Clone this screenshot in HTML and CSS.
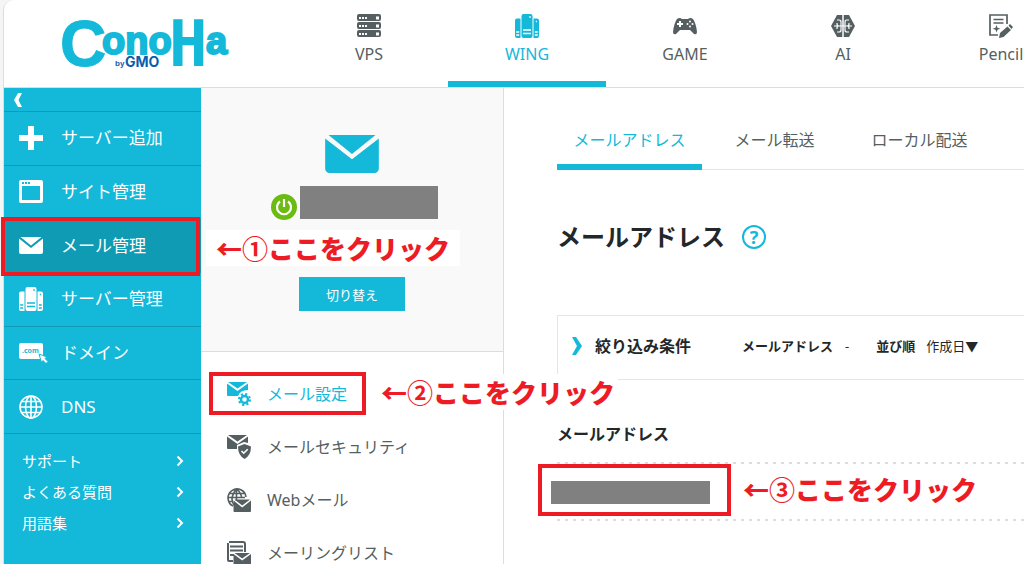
FILE: index.html
```
<!DOCTYPE html>
<html lang="ja">
<head>
    <meta charset="UTF-8">
    <meta name="viewport" content="width=device-width, initial-scale=1.0">
    <title>メールアドレス | ConoHa WING</title>
    <link rel="stylesheet" href="styles.css">
</head>
<body>
    <!-- 共通アイコン -->
    <svg class="sprite" aria-hidden="true">
        <symbol id="icon-servers" viewBox="0 0 24 24">
            <rect x="6.500" y="0" width="11" height="24" rx="2"/>
            <path d="M2 4.500h3.500V24H2a2 2 0 0 1-2-2V6.500a2 2 0 0 1 2-2zM18.500 4.500H22a2 2 0 0 1 2 2V22a2 2 0 0 1-2 2h-3.500z"/>
            <g class="cut">
                <path d="M8 16h8M8 19.500h8M1.200 18h3M1.200 21h3M19.800 18h3M19.800 21h3"/>
                <path d="M14.200 3h1.600M20.800 7.500h1.200"/>
            </g>
        </symbol>
        <symbol id="icon-mail" viewBox="0 0 24 17">
            <path d="M1.500 0h21L12 8.500z"/>
            <path d="M0 1.600l12 9.300 12-9.300V15a2 2 0 0 1-2 2H2a2 2 0 0 1-2-2z"/>
        </symbol>
        <symbol id="icon-arrow" viewBox="0 0 8 12">
            <path d="M1.500 1.500L6 6l-4.500 4.500" fill="none" stroke="currentColor" stroke-width="2"/>
        </symbol>
    </svg>

    <div class="app">
        <header class="header">
            <a href="#" class="logo" aria-label="ConoHa by GMO">
                <svg width="168" height="54" viewBox="0 0 168 54">
                    <text class="logo-c" x="-2" y="50">C</text>
                    <text class="logo-s" x="40" y="38">ono</text>
                    <text class="logo-h" x="107" y="50">H</text>
                    <text class="logo-s" x="144" y="38">a</text>
                    <text class="logo-by" x="53" y="50">by</text>
                    <text class="logo-gmo" x="63" y="51">GMO</text>
                </svg>
            </a>
            <nav class="service-nav">
                <a href="#">
                    <svg width="24" height="24" viewBox="0 0 24 24">
                        <rect width="24" height="7" rx="2"/><rect y="8" width="24" height="7" rx="2"/><rect y="16" width="24" height="7" rx="2"/>
                        <path d="M2 4h9M2 12h9M2 20h9" fill="none" stroke="#fff" stroke-width="2" stroke-dasharray="2 1"/>
                        <path d="M19 4h3M19 12h3M19 20h3" stroke="#fff" stroke-width="3"/>
                    </svg>
                    <span>VPS</span>
                </a>
                <a href="#" class="active">
                    <svg width="24" height="24"><use href="#icon-servers"/></svg>
                    <span>WING</span>
                </a>
                <a href="#">
                    <svg width="24" height="24" viewBox="0 0 24 24">
                        <path d="M4 5q3-2 5 0h6q2-2 5 0 3 4 4 13 0 3-3 2l-4-4H7l-4 4q-3 1-3-2Q1 9 4 5z"/>
                        <g fill="#fff"><path d="M6 7h2v2h2v2H8v2H6v-2H4V9h2z"/><circle cx="17" cy="7.500" r="1"/><circle cx="17" cy="12.500" r="1"/><circle cx="14.500" cy="10" r="1"/><circle cx="19.500" cy="10" r="1"/></g>
                    </svg>
                    <span>GAME</span>
                </a>
                <a href="#">
                    <svg width="24" height="24" viewBox="0 0 24 24">
                        <path d="M6 1h12l6 11-6 11H6L0 12z"/>
                        <g fill="none" stroke="#fff" stroke-width="1.200">
                            <path d="M12 1v22" stroke-width="1.500"/>
                            <path d="M3 12h18M10 12V8q0-2-2-2H6M10 12v4q0 2-2 2H6M14 12V8q0-2 2-2h2M14 12v4q0 2 2 2h2M6 9v1q0 2 2 2M6 15v-1q0-2 2-2M18 9v1q0 2-2 2M18 15v-1q0-2-2-2"/>
                        </g>
                    </svg>
                    <span>AI</span>
                </a>
                <a href="#">
                    <svg width="24" height="24" viewBox="0 0 24 24">
                        <path d="M18 10V1H1v20h8M4.500 5.500h10M4.500 9h10" fill="none" stroke="currentColor" stroke-width="1.700"/>
                        <path d="M7.500 11l1 2.800 2.800 1-2.800 1-1 2.800-1-2.800-2.800-1 2.800-1z"/>
                        <path d="M10 24l1-5 7.500-6.500 3.500 3.500-7.500 7zM19.500 11.500l1.500-1.500 3 3-1.500 2z"/>
                    </svg>
                    <span>Pencil</span>
                </a>
            </nav>
        </header>

        <div class="layout">
            <!-- 左サイドバー -->
            <aside class="sidebar">
                <button type="button" class="collapse" aria-label="メニューを閉じる">
                    <svg width="8" height="14" viewBox="0 0 8 14"><path d="M4 0h4L4.500 7 8 14H4L0 7z"/></svg>
                </button>
                <ul class="side-menu">
                    <li><a href="#">
                        <svg width="24" height="24" viewBox="0 0 24 24"><path d="M9 0h6v9h9v6h-9v9H9v-9H0V9h9z"/></svg>
                        サーバー追加
                    </a></li>
                    <li><a href="#">
                        <svg width="24" height="24" viewBox="0 0 24 24"><path fill-rule="evenodd" d="M2 0h20a2 2 0 0 1 2 2v19a2 2 0 0 1-2 2H2a2 2 0 0 1-2-2V2a2 2 0 0 1 2-2zM3 6v14h18V6zM3 2v2h2V2zM6 2v2h2V2zM9 2v2h2V2z"/></svg>
                        サイト管理
                    </a></li>
                    <li class="current"><a href="#">
                        <svg width="24" height="17"><use href="#icon-mail"/></svg>
                        メール管理
                    </a></li>
                    <li><a href="#">
                        <svg width="24" height="24"><use href="#icon-servers"/></svg>
                        サーバー管理
                    </a></li>
                    <li><a href="#">
                        <svg class="domain" width="29" height="20" viewBox="0 0 29 20">
                            <rect width="24" height="16" rx="2"/>
                            <text x="3" y="10">.com</text>
                            <path class="cursor" d="M20 11l8 3-2 1.500 3 3-2 2-3-3-1.500 2z"/>
                        </svg>
                        ドメイン
                    </a></li>
                    <li><a href="#">
                        <svg width="24" height="24" viewBox="0 0 24 24">
                            <g fill="none" stroke="currentColor" stroke-width="1.600"><circle cx="12" cy="12" r="11"/><ellipse cx="12" cy="12" rx="5.500" ry="11"/><path d="M12 1v22M1 12h22M3 6.500h18M3 17.500h18"/></g>
                        </svg>
                        DNS
                    </a></li>
                </ul>
                <ul class="side-links">
                    <li><a href="#">サポート<svg width="8" height="12"><use href="#icon-arrow"/></svg></a></li>
                    <li><a href="#">よくある質問<svg width="8" height="12"><use href="#icon-arrow"/></svg></a></li>
                    <li><a href="#">用語集<svg width="8" height="12"><use href="#icon-arrow"/></svg></a></li>
                </ul>
            </aside>

            <!-- メール管理メニュー -->
            <section class="panel">
                <div class="account">
                    <svg class="account-icon" width="54" height="38"><use href="#icon-mail"/></svg>
                    <div class="account-name">
                        <svg width="26" height="26" viewBox="0 0 26 26">
                            <circle cx="13" cy="13" r="13" fill="#6cbb12"/>
                            <path d="M9 7.500a7 7 0 1 0 8 0M13 5v8" fill="none" stroke="#fff" stroke-width="2.200"/>
                        </svg>
                        <span class="masked"></span>
                    </div>
                    <button type="button" class="switch">切り替え</button>
                    <p class="note note-1">←<span>①</span>ここをクリック</p>
                </div>
                <ul class="mail-menu">
                    <li class="current"><a href="#">
                        <svg width="24" height="24" viewBox="0 0 24 24">
                            <path d="M1 0h19l-9.500 6.500z"/><path d="M0 1.500L10.500 9 21 1.500V8q-8 0-10 6H1q-1 0-1-1z"/>
                            <circle cx="17.500" cy="17.500" r="3.500" fill="none" stroke="currentColor" stroke-width="2.400"/>
                            <circle cx="17.500" cy="17.500" r="5.500" fill="none" stroke="currentColor" stroke-width="2" stroke-dasharray="2.160 2.160"/>
                        </svg>
                        メール設定
                    </a></li>
                    <li><a href="#">
                        <svg width="24" height="24" viewBox="0 0 24 24">
                            <path d="M1 0h19l-9.500 6.500z"/><path d="M0 1.500L10.500 9 21 1.500V8l-4-1-7 3v4H1q-1 0-1-1z"/>
                            <path d="M17.500 9l6.500 2.500q0 9-6.500 12.500-6.500-3.500-6.500-12.500z"/>
                            <path d="M14.500 16l2.200 2.200 4-4" fill="none" stroke="#fff" stroke-width="1.600"/>
                        </svg>
                        メールセキュリティ
                    </a></li>
                    <li><a href="#">
                        <svg width="24" height="24" viewBox="0 0 24 24">
                            <g fill="none" stroke="currentColor" stroke-width="1.600"><path d="M6 18A9 9 0 1 1 19 9M9.500 1v12M9.500 1Q2 10 7 17M9.500 1q5 4 5 9M1 9.500h17M2 5.500h15M1.500 13.500H6"/></g>
                            <path d="M7.500 11.500h15.500l-7.800 6z"/><path d="M6.500 12.500l8.700 7 8.800-7V23q0 1-1 1H7.500q-1 0-1-1z"/>
                        </svg>
                        Webメール
                    </a></li>
                    <li><a href="#">
                        <svg width="24" height="24" viewBox="0 0 24 24">
                            <path d="M2 1h14q2 0 2 2v8M6 20H2q-1 0-1-1V2" fill="none" stroke="currentColor" stroke-width="2"/>
                            <path d="M3 5.500h13M3 9.500h13M3 14h4" fill="none" stroke="currentColor" stroke-width="2"/>
                            <path d="M7.500 12h15.500l-7.800 5.500z"/><path d="M6.500 13l8.700 6.500 8.800-6.500V23q0 1-1 1H7.500q-1 0-1-1z"/>
                        </svg>
                        メーリングリスト
                    </a></li>
                </ul>
            </section>

            <!-- メインコンテンツ -->
            <main class="main">
                <nav class="tabs">
                    <a href="#" class="active">メールアドレス</a>
                    <a href="#">メール転送</a>
                    <a href="#">ローカル配送</a>
                </nav>
                <div class="title">
                    <h1>メールアドレス</h1>
                    <button type="button" class="help" aria-label="ヘルプ">?</button>
                </div>
                <div class="filter">
                    <svg width="10" height="18" viewBox="0 0 10 18"><path d="M0 0h4l6 9-6 9H0l5-9z"/></svg>
                    <strong class="filter-title">絞り込み条件</strong>
                    <strong>メールアドレス</strong>
                    <span class="filter-value">-</span>
                    <strong>並び順</strong>
                    <span>作成日▼</span>
                </div>
                <table class="address-table">
                    <thead>
                        <tr><th>メールアドレス</th></tr>
                    </thead>
                    <tbody>
                        <tr><td>
                            <span class="masked"></span>
                            <p class="note note-3">←<span>③</span>ここをクリック</p>
                        </td></tr>
                    </tbody>
                </table>
            </main>
            <p class="note note-2">←<span>②</span>ここをクリック</p>
        </div>
    </div>
</body>
</html>
```
FILE: styles.css
```
*,
*::after {
    box-sizing: border-box;
}

body {
    margin: 0;
    background-color: #f5f5f5;
    color: #555f61;
    font-family: "Noto Sans", "Noto Sans CJK JP", sans-serif;
    font-size: 16px;
    line-height: 24px;
    overflow: hidden;
}

a {
    color: inherit;
    text-decoration: none;
}

ul {
    list-style: none;
    margin: 0;
    padding: 0;
}

button {
    border: none;
    font-family: inherit;
    cursor: pointer;
}

svg {
    fill: currentColor;
    flex: none;
}

.sprite {
    position: absolute;
    width: 0;
    height: 0;
}

.cut {
    fill: none;
    stroke: var(--cut, #fff);
    stroke-width: 1.5;
}

.app {
    margin-left: 3px;
    border-left: 1px solid #dddddd;
    border-top-left-radius: 10px;
    background-color: #fff;
}

/* ヘッダー */
.header {
    display: flex;
    height: 88px;
    border-bottom: 1px solid #dddddd;
    overflow: hidden;
}

.logo {
    width: 286px;
    flex: none;
    padding: 16px 0 0 58px;
    color: #14b8d9;
}

.logo svg {
    display: block;
    overflow: visible;
}

.logo text {
    font-family: "Liberation Sans", sans-serif;
    font-weight: 700;
}

.logo .logo-c {
    font-size: 64px;
    stroke: #14b8d9;
    stroke-width: 1;
}

.logo .logo-s {
    font-size: 38px;
    stroke: #14b8d9;
    stroke-width: 2;
}

.logo .logo-h {
    font-family: "DejaVu Sans Mono", monospace;
    font-size: 64px;
}

.logo .logo-by,
.logo .logo-gmo {
    fill: #0d5cab;
    font-size: 8px;
}

.logo .logo-gmo {
    font-family: "Inter", sans-serif;
    font-size: 14px;
}

.service-nav {
    display: flex;
}

.service-nav a {
    width: 158px;
    padding-top: 14px;
    display: flex;
    flex-direction: column;
    align-items: center;
    gap: 4px;
}

.service-nav .active {
    color: #14b8d9;
    border-bottom: 6px solid #14b8d9;
}

.layout {
    display: flex;
    position: relative;
    min-height: calc(100vh - 88px);
}

/* 左サイドバー */
.sidebar {
    --cut: #14b8d9;
    width: 197px;
    flex: none;
    background-color: #14b8d9;
    color: #fff;
}

.collapse {
    display: flex;
    align-items: center;
    width: 100%;
    height: 24px;
    padding: 0 10px;
    background: none;
    color: #fff;
    border-bottom: 1px solid #109bb5;
}

.side-menu {
    display: flex;
    flex-direction: column;
    height: 322px;
}

.side-menu li {
    flex: 1;
    border-bottom: 1px solid #109bb5;
}

.side-menu a {
    display: grid;
    grid-template-columns: 24px 1fr;
    gap: 18px;
    align-items: center;
    height: 100%;
    padding-left: 15px;
    font-size: 17px;
}

.side-menu .current {
    position: relative;
    background-color: #109bb5;
}

/* クリック位置の赤枠 */
.side-menu .current::after,
.mail-menu .current::after,
.address-table td::after {
    content: "";
    position: absolute;
    border: 4px solid #ed1c24;
}

.side-menu .current::after {
    inset: -2px 1px -4px -3px;
}

.domain {
    overflow: visible;
}

.domain text {
    fill: #14b8d9;
    font-size: 7px;
    font-weight: 700;
}

.domain .cursor {
    stroke: #14b8d9;
}

.side-links {
    padding: 11px 17px 0 18px;
}

.side-links a {
    display: flex;
    align-items: center;
    justify-content: space-between;
    height: 31px;
    font-size: 15px;
}

/* メール管理メニュー */
.panel {
    width: 303px;
    flex: none;
    border-right: 1px solid #dddddd;
}

.account {
    position: relative;
    display: flex;
    flex-direction: column;
    align-items: center;
    height: 264px;
    padding-top: 47px;
    background-color: #f9f9f9;
    border-bottom: 1px solid #dddddd;
}

.account-icon {
    color: #14b8d9;
}

.account-name {
    display: flex;
    align-items: flex-end;
    gap: 3px;
    margin-top: 13px;
    margin-bottom: 58px;
    padding-left: 5px;
}

.account-name svg {
    margin-bottom: -1px;
}

.masked {
    display: block;
    background-color: #808080;
}

.account-name .masked {
    width: 138px;
    height: 33px;
}

.switch {
    width: 106px;
    height: 34px;
    padding: 0;
    background-color: #14b8d9;
    color: #fff;
    font-size: 13px;
}

.mail-menu {
    padding-top: 15px;
}

.mail-menu a {
    display: flex;
    align-items: center;
    gap: 16px;
    height: 53px;
    padding-left: 26px;
}

.mail-menu .current {
    position: relative;
    color: #14b8d9;
}

.mail-menu .current::after {
    inset: 5px 137px 5px 8px;
}

/* メインコンテンツ */
.main {
    flex: 1;
    min-width: 0;
    padding-left: 53px;
    color: #222829;
}

.tabs {
    display: flex;
    height: 82px;
    border-bottom: 1px solid #e5e5e5;
    color: #555f61;
}

.tabs a {
    width: 145px;
    height: 82px;
    padding-top: 40px;
    text-align: center;
}

.tabs .active {
    color: #14b8d9;
    border-bottom: 6px solid #14b8d9;
}

.title {
    display: flex;
    align-items: center;
    gap: 17px;
    margin-top: 49px;
}

.title h1 {
    margin: 0;
    font-size: 24px;
    line-height: 36px;
}

.help {
    width: 24px;
    height: 24px;
    padding: 0;
    border: 2px solid #14b8d9;
    border-radius: 50%;
    background: none;
    color: #14b8d9;
    font-size: 18px;
    font-weight: 700;
    line-height: 20px;
}

.filter {
    display: flex;
    align-items: center;
    height: 65px;
    margin-top: 60px;
    padding: 0 14px 4px;
    border: 1px solid #e5e5e5;
    border-right: none;
    font-size: 13px;
    white-space: nowrap;
}

.filter svg {
    color: #14b8d9;
}

.filter .filter-title {
    margin: 0 51px 0 13px;
    font-size: 16px;
}

.filter-value {
    margin: 0 27px 0 12px;
}

.filter span:last-child {
    margin-left: 11px;
}

.address-table {
    width: 100%;
    margin-top: 42px;
    border-collapse: collapse;
}

.address-table th,
.address-table td {
    position: relative;
    padding: 0;
    background: repeating-linear-gradient(90deg, #dddddd 0 3px, transparent 3px 8px) left bottom / 100% 2px no-repeat;
    text-align: left;
}

.address-table th {
    height: 42px;
    vertical-align: top;
}

.address-table td {
    height: 57px;
}

.address-table .masked {
    width: 159px;
    height: 23px;
    margin-left: -6px;
}

.address-table td::after {
    top: 0;
    left: -19px;
    width: 193px;
    height: 52px;
}

/* 手順の吹き出し */
.note {
    position: absolute;
    margin: 0;
    padding: 0 10px;
    background-color: #fff;
    color: #ed1c24;
    font-family: "Noto Sans CJK JP", sans-serif;
    font-size: 26px;
    font-weight: 900;
    line-height: 36px;
    white-space: nowrap;
}

.note span {
    font-weight: 700;
}

.note-1 {
    top: 142px;
    left: 5px;
}

.note-2 {
    top: 286px;
    left: 367px;
    padding-right: 3px;
}

.note-3 {
    top: 7px;
    left: 176px;
}
```
